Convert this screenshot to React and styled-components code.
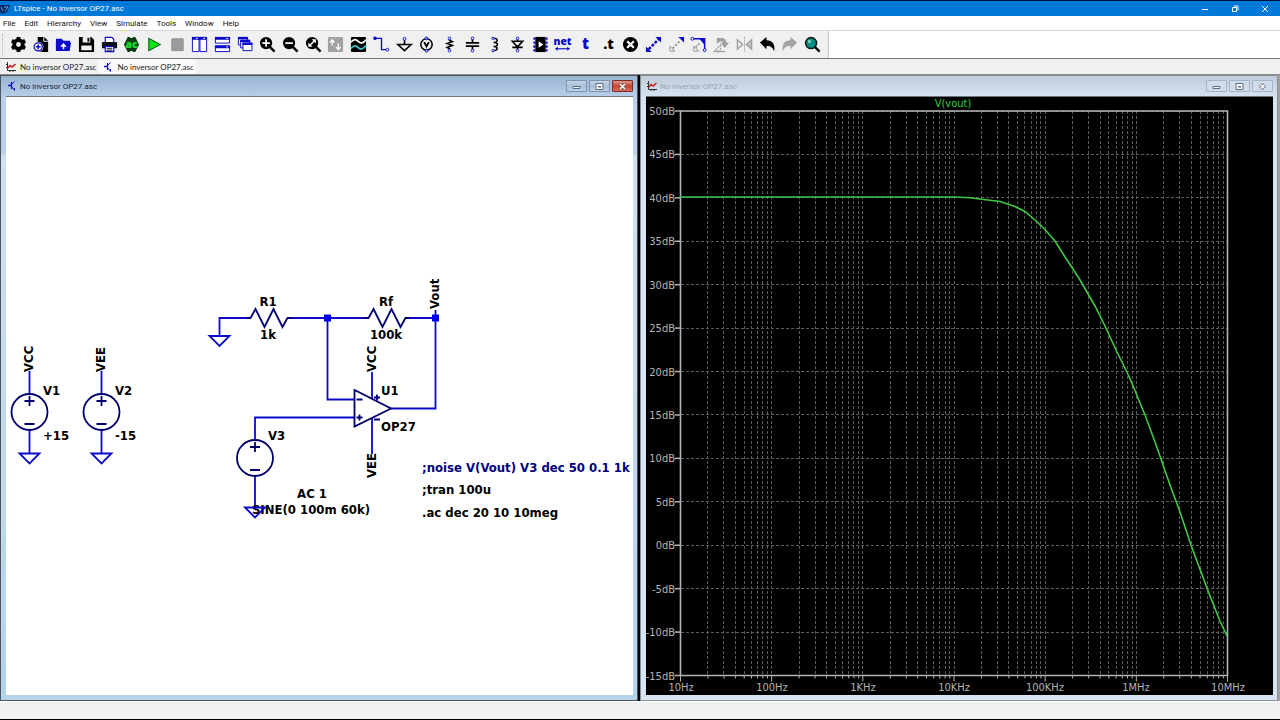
import React, { useState } from "react";
import styled, { createGlobalStyle } from "styled-components";

const GlobalStyle = createGlobalStyle`
  * {
    box-sizing: border-box;
  }
  body {
    margin: 0;
    font-family: Roboto, "Open Sans", sans-serif;
    font-size: 8px;
    background: #f0f0f0;
  }
  button {
    font: inherit;
    color: inherit;
    border: none;
    background: none;
    padding: 0;
  }
`;

const Page = styled.div`
  height: 100vh;
  display: flex;
  flex-direction: column;
  overflow: hidden;
  border-top: 1px solid #02113f;
  border-bottom: 1px solid #000;
`;
const TitleBar = styled.header`
  height: 15px;
  display: flex;
  align-items: center;
  background: #0078d7;
  color: #fff;
`;
const AppTitle = styled.h1`
  margin: 0 0 0 4px;
  font-size: 8px;
  font-weight: 400;
  flex: 1;
`;
const CaptionButton = styled.button`
  width: 30px;
  height: 15px;
  display: flex;
  align-items: center;
  justify-content: center;
`;
const MenuBar = styled.nav`
  height: 15px;
  display: flex;
  align-items: center;
  gap: 9px;
  padding: 0 3px;
  background: #fff;
  border-bottom: 1px solid #d8d8d8;
`;
const MenuItem = styled.button`
  color: #111;
`;
const ToolRow = styled.div`
  height: 28px;
  background: #fff;
  border-bottom: 1px solid #767676;
`;
const Toolbar = styled.div`
  width: 829px;
  height: 27px;
  display: flex;
  align-items: center;
  padding: 0 4px 0 2px;
  background: #f0f0f0;
  border-right: 1px solid #c8c8c8;
`;
const Grip = styled.span`
  width: 5px;
  height: 22px;
  border-left: 1px dotted #b0b0b0;
`;
const ToolButton = styled.button`
  flex: 1;
  height: 24px;
  display: flex;
  align-items: center;
  justify-content: center;
`;
const ToolIcon = styled.svg`
  width: 17px;
  height: 17px;
  overflow: visible;
`;
const TabRow = styled.div`
  height: 16px;
  display: flex;
  align-items: stretch;
  padding-left: 1px;
  background: #f0f0f0;
  border-bottom: 1px solid #8a8a8a;
`;
const Tab = styled.button`
  display: flex;
  align-items: center;
  gap: 4px;
  padding: 0 2px 0 5px;
  font-family: Lato, sans-serif;
  color: #222;
  background: ${(props) => (props.$active ? "#fafafa" : "transparent")};
`;
const Workspace = styled.main`
  flex: 1;
  min-height: 0;
  display: flex;
  gap: 2px;
  padding-right: 2px;
  background: linear-gradient(90deg, #000 60%, #a0a0a0 60%);
`;
const ChildWindow = styled.section`
  flex: 1;
  min-width: 0;
  display: flex;
  flex-direction: column;
  padding: 0 4px 5px 5px;
  border: 1px solid ${(props) => (props.$active ? "#4c5560" : "#8a9097")};
  background: ${(props) =>
    props.$active
      ? "linear-gradient(#99b4d1, #b9d1ea 22px, #b9d1ea 78px, #cfe0f2 80px, #b5d3ea)"
      : "linear-gradient(#bfcddb, #d7e4f2 22px)"};
`;
const ChildTitle = styled.div`
  height: 20px;
  display: flex;
  align-items: center;
  padding-left: 1px;
  color: ${(props) => (props.$active ? "#1c2430" : "#9aa3ad")};
`;
const ChildName = styled.h2`
  margin: 0 0 0 3px;
  font-size: 8px;
  font-weight: 400;
  flex: 1;
`;
const WindowButtons = styled.div`
  display: flex;
  gap: 2px;
`;
const WindowButton = styled.button`
  width: 21px;
  height: 12px;
  display: flex;
  align-items: center;
  justify-content: center;
  border: 1px solid
    ${(props) => (props.$close ? "#7d2a26" : props.$active ? "#7f93ab" : "#a3b3c8")};
  border-radius: 1px;
  background: ${(props) =>
    props.$close
      ? "linear-gradient(#e09a8c, #c8422f 50%, #d9705a)"
      : props.$active
        ? "linear-gradient(#c3d4e8, #a9c0da 50%, #bcd2ea)"
        : "#d0dcea"};
`;
const Pane = styled.div`
  flex: 1;
  min-height: 0;
  overflow: hidden;
  background: ${(props) => (props.$dark ? "#000" : "#fff")};
  border-top: 1px solid #6c7680;
`;
const Canvas = styled.svg`
  display: block;
`;
const StatusBar = styled.footer`
  height: 18px;
  background: #f0f0f0;
  border-top: 1px solid #fff;
`;

const PlotText = styled.text`
  font: 11px "DejaVu Sans Condensed", "DejaVu Sans", sans-serif;
  fill: ${(props) => (props.$trace ? "#2fd33a" : "#b4b4b4")};
`;
const Label = styled.text`
  font: bold 13px "DejaVu Sans Condensed", "DejaVu Sans", sans-serif;
  fill: ${(props) => (props.$comment ? "#000080" : "#000")};
`;

const BLUE = "#0a0ac8";
const NAVY = "#000070";

const zoomLens = (
  <>
    <circle cx="7.5" cy="7.5" r="6.5" fill="#000" />
    <path d="M11 11l5.5 5.5" stroke="#000" strokeWidth="2.6" />
  </>
);

const tools = [
  ["Settings", <>
    <circle cx="9" cy="9" r="4.6" fill="none" stroke="#000" strokeWidth="4" />
    <path d="M9 1v3M9 14v3M2 5l3 1.700M13 11.300l3 1.700M2 13l3-1.700M13 6.700l3-1.700" stroke="#000" strokeWidth="4" />
  </>],
  ["New schematic", <>
    <path d="M5 1h6v5h5v11H5z" fill="#000" />
    <path d="M12 1l4 4h-4z" fill="#000" />
    <circle cx="5.500" cy="11.500" r="5.500" fill="#f0f0f0" />
    <circle cx="5.500" cy="11.500" r="4.300" fill="#fff" stroke={BLUE} strokeWidth="1.300" />
    <path d="M5.500 9v5M3 11.500h5" stroke={BLUE} strokeWidth="1.600" />
  </>],
  ["Open", <>
    <path d="M1 3h6l2 2h7v3H4L2 15H1z" fill={BLUE} />
    <path d="M1 7h16l-1.500 9H1z" fill={BLUE} />
    <path d="M9 14V9M6.500 11.300L9 8.500l2.500 2.800" stroke="#fff" strokeWidth="1.600" fill="none" />
  </>],
  ["Save", <>
    <path d="M1 1h13l3 3v13H1z" fill="#000" />
    <path d="M5 1h8v6H5zM3.500 10h11v5h-11z" fill="#f0f0f0" />
    <path d="M10 2h2v4h-2z" fill="#000" />
  </>],
  ["Print", <>
    <path d="M4.500 1.500h7l2 2V7h-9z" fill="#fff" stroke={BLUE} strokeWidth="1.200" />
    <path d="M1 6.500h16V13H1z" fill="#101010" />
    <path d="M4.500 11h9v5.500h-9z" fill="#fff" stroke={BLUE} strokeWidth="1.200" />
    <path d="M6 13h6M6 15h6" stroke="#000" />
  </>],
  ["Configure analysis", <>
    <path d="M5 1h2l1 1h2l1-1h2l2 4 2 4-2 4-2 4h-2l-1-1H8l-1 1H5l-2-4-2-4 2-4z" fill="#0b3d12" />
    <text x="9" y="12.500" textAnchor="middle" fill="#17e52b" fontSize="11" fontWeight="800" fontFamily="Open Sans">ac</text>
  </>],
  ["Run", <path d="M3 2.500v13L15 9z" fill="#08ea12" stroke="#0b5c10" strokeWidth="1.200" />],
  ["Stop", <path d="M3 3h12v12.500H3z" fill="#9b9b9b" stroke="#8c8c8c" />],
  ["Tile vertically", <>
    <path d="M1.500 1.500h7v15h-7zM9.500 1.500h7v15h-7z" fill="#fff" stroke={BLUE} />
    <path d="M1 1h16v3H1z" fill={BLUE} />
    <path d="M5 2.500h2M13 2.500h2" stroke="#fff" />
  </>],
  ["Tile horizontally", <>
    <path d="M1.500 1.500h15v6h-15zM1.500 10.500h15v6h-15z" fill="#fff" stroke={BLUE} />
    <path d="M1 1h16v3H1zM1 10h16v3H1z" fill={BLUE} />
    <path d="M13 2.500h2M13 11.500h2" stroke="#fff" />
  </>],
  ["Cascade", <>
    {[0, 3, 6].map((d) => (
      <g key={d}>
        <path d={`M${1.5 + d * 0.8} ${1.5 + d}h9.500v8h-9.500z`} fill="#fff" stroke={BLUE} />
        <path d={`M${1 + d * 0.8} ${1 + d}h10.500v2.500h-10.500z`} fill={BLUE} />
      </g>
    ))}
  </>],
  ["Zoom in", <>
    {zoomLens}
    <path d="M7.500 3.500v8M3.500 7.500h8" stroke="#fff" strokeWidth="1.800" />
  </>],
  ["Zoom out", <>
    {zoomLens}
    <path d="M3.500 7.500h8" stroke="#fff" strokeWidth="1.800" />
  </>],
  ["Zoom to fit", <>
    {zoomLens}
    <path d="M5 10l5-5" stroke="#fff" strokeWidth="1.400" />
    <path d="M7 3.500h4.500V8zM3.500 7v4.500H8z" fill="#fff" />
  </>],
  ["Autorange", <>
    <rect x="1" y="1" width="16" height="16" rx="1.500" fill="#a2a2a2" />
    <path d="M5.500 10V5M3 7l2.500-3L8 7M12 8v6M9.500 11.500L12 14.500l2.500-3" stroke="#fff" strokeWidth="1.400" fill="none" />
  </>],
  ["Waveforms", <>
    <rect x="1" y="1" width="16" height="16" rx="1" fill="#000" />
    <path d="M1 6.500C5 2 7 4 9 6s5 2 8-2" stroke="#fff" strokeWidth="1.800" fill="none" />
    <path d="M1 13c4-4 6-2.500 8-.500s5 1.500 8-2.500" stroke="#3cc9d0" strokeWidth="1.800" fill="none" />
  </>],
  ["Wire", <>
    <path d="M2 2.500h7v12h5" stroke={BLUE} strokeWidth="1.400" fill="none" />
    <circle cx="2.200" cy="2.500" r="1.900" fill={BLUE} />
    <circle cx="15.300" cy="14.500" r="1.500" fill="#fff" stroke={BLUE} />
  </>],
  ["Ground", <>
    <path d="M9 4v5M2 9h14l-7 6.500z" stroke="#000" strokeWidth="1.700" fill="none" />
    <circle cx="9" cy="3" r="1.500" fill="#fff" stroke={BLUE} />
  </>],
  ["Voltage source", <>
    <circle cx="9" cy="9" r="6" stroke="#000" strokeWidth="1.600" fill="none" />
    <path d="M6.500 6.500L9 11l2.500-4.500" stroke="#000" strokeWidth="2" fill="none" />
    <circle cx="9" cy="2.500" r="1.500" fill="#aaf" stroke={BLUE} />
    <circle cx="9" cy="15.500" r="1.500" fill="#aaf" stroke={BLUE} />
  </>],
  ["Resistor", <>
    <path d="M9 3v1.500L12 6 6.500 8l5.500 2-5.500 2L9 13.500V15" stroke="#000" strokeWidth="1.700" fill="none" />
    <circle cx="9" cy="2.500" r="1.400" fill="#fff" stroke={BLUE} />
    <circle cx="9" cy="15.500" r="1.400" fill="#fff" stroke={BLUE} />
  </>],
  ["Capacitor", <>
    <path d="M9 3v4M9 11v4M2 7.200h14M2 10.800h14" stroke="#000" strokeWidth="1.800" />
    <circle cx="9" cy="2.500" r="1.400" fill="#fff" stroke={BLUE} />
    <circle cx="9" cy="15.500" r="1.400" fill="#fff" stroke={BLUE} />
  </>],
  ["Inductor", <>
    <path d="M8 2.500c5 0 5 4.300 0 4.300c5.500 0 5.500 4.400 0 4.400c5 0 5 4.300 0 4.300" stroke="#000" strokeWidth="1.600" fill="none" />
    <circle cx="7.500" cy="2.500" r="1.200" fill="#fff" stroke={BLUE} />
    <circle cx="7.500" cy="15.500" r="1.200" fill="#fff" stroke={BLUE} />
  </>],
  ["Diode", <>
    <path d="M9 3v2M9 12v3M3.500 5.500h11L9 11.500zM3.500 12h11" stroke="#000" strokeWidth="1.700" fill="none" />
    <circle cx="9" cy="2.500" r="1.400" fill="#fff" stroke={BLUE} />
    <circle cx="9" cy="15.500" r="1.400" fill="#fff" stroke={BLUE} />
  </>],
  ["Component", <>
    <path d="M3.500 1h11v16h-11z" fill="#000" />
    <path d="M2.500 1.500v15M15.500 1.500v15" stroke={BLUE} strokeWidth="2" strokeDasharray="2.500 1.700" />
    <path d="M7 5.500v7L12 9z" fill="#fff" />
  </>],
  ["Label net", <>
    <text x="9" y="9" textAnchor="middle" fill={BLUE} fontSize="11" fontWeight="800" fontFamily="Open Sans">net</text>
    <path d="M2 13.500h14" stroke={BLUE} strokeWidth="1.200" />
    <path d="M1 13.500l3-2v4zM17 13.500l-3-2v4z" fill={BLUE} />
  </>],
  ["Comment", <text x="9" y="14" textAnchor="middle" fill={BLUE} fontSize="16" fontWeight="800" fontFamily="Open Sans">t</text>],
  ["Directive", <text x="9" y="14" textAnchor="middle" fill="#000" fontSize="15" fontWeight="800" fontFamily="Open Sans">.t</text>],
  ["Delete", <>
    <circle cx="9" cy="9" r="8" fill="#000" />
    <path d="M5.500 5.500l7 7M12.500 5.500l-7 7" stroke="#fff" strokeWidth="2.400" />
  </>],
  ["Move", <>
    <path d="M4 14L14 4" stroke={BLUE} strokeWidth="2.600" strokeDasharray="3 1.500" />
    <path d="M17 1v6l-6-6zM1 17v-6l6 6z" fill={BLUE} />
  </>],
  ["Duplicate", <>
    <path d="M5 13l7-7" stroke="#888" strokeWidth="1.800" strokeDasharray="2 2" />
    <path d="M17 1v6l-6-6z" fill={BLUE} />
    <path d="M2 16v-5l5 5z" fill="#fff" stroke="#888" />
  </>],
  ["Drag", <>
    <path d="M3 3h12.500v11" stroke={BLUE} strokeWidth="1.600" fill="none" />
    <path d="M15 3v6L10 3z" fill={BLUE} />
    <path d="M6 12l5-5" stroke="#888" strokeWidth="1.800" strokeDasharray="2 1.500" />
    <path d="M4 16v-5l5 5z" fill="#fff" stroke="#888" />
    <circle cx="2.500" cy="3" r="1.500" fill="#fff" stroke={BLUE} />
    <circle cx="15.500" cy="15" r="1.500" fill="#fff" stroke={BLUE} />
  </>],
  ["Rotate", <>
    <path d="M8 9.500v6.500H1.500z" stroke="#a0a0a0" strokeWidth="1.400" strokeDasharray="2 1" fill="none" />
    <path d="M1.500 16.500H13" stroke="#a0a0a0" strokeWidth="1.400" />
    <path d="M4 2h5c3.500 0 5 2 5 5h3l-4.500 6L8 7h2.500c0-1-.500-1.500-2-1.500L4 8z" fill="#a0a0a0" />
  </>],
  ["Mirror", <>
    <path d="M1.500 4v10L7 9z" fill="none" stroke="#a0a0a0" strokeWidth="1.500" />
    <path d="M16.500 4v10L11 9z" fill="#c4c4c4" stroke="#a0a0a0" strokeWidth="1.500" />
    <path d="M9 1v16" stroke="#a0a0a0" strokeDasharray="2 1" />
  </>],
  ["Undo", <path d="M1 7l7-6v3.500c6 0 9.500 4 8 12-1-4-3-6-8-6V14z" fill="#000" />],
  ["Redo", <path d="M17 7l-7-6v3.500c-6 0-9.500 4-8 12 1-4 3-6 8-6V14z" fill="#a4a4a4" />],
  ["Search", <>
    <circle cx="7.500" cy="7.500" r="5.800" fill="#079083" stroke="#05201d" strokeWidth="1.700" />
    <circle cx="5.700" cy="5.700" r="1.600" fill="#6fd6c8" />
    <path d="M11.500 11.500l5 5" stroke="#000" strokeWidth="2.400" />
  </>],
];

const menus = ["File", "Edit", "Hierarchy", "View", "Simulate", "Tools", "Window", "Help"];

const SchematicIcon = () => (
  <svg width="10" height="10" viewBox="0 0 10 10" fill="none" stroke="#1515c0">
    <path d="M1 4.500h3M4.500 1v7" strokeWidth="1.300" />
    <path d="M4.500 3.500L7.500 .500M4.500 5.500l3 4M7.500 9.500V7" />
  </svg>
);

const WaveIcon = () => (
  <svg width="10" height="10" viewBox="0 0 10 10" fill="none">
    <path d="M1.500 0v8.500H10M0 2.500h1.500M0 5.500h1.500M4 8.500V10M7 8.500V10" stroke="#333" />
    <path d="M2 6l2-2.500 2 1.500 3.500-3" stroke="#d01818" strokeWidth="1.500" />
  </svg>
);

const WindowControls = ({ active }) => (
  <WindowButtons>
    <WindowButton aria-label="Minimize" $active={active}>
      <svg width="9" height="7" viewBox="0 0 9 7">
        <path d="M1 3.500h7v2H1z" fill="#fff" stroke="#5f6b80" />
      </svg>
    </WindowButton>
    <WindowButton aria-label="Maximize" $active={active}>
      <svg width="9" height="7" viewBox="0 0 9 7">
        <path d="M1 .500h7v6H1z" fill="#fff" stroke="#5f6b80" />
        <path d="M3 3h3v1.500H3z" fill="#5f6b80" />
      </svg>
    </WindowButton>
    <WindowButton aria-label="Close" $active={active} $close={active}>
      <svg width="9" height="7" viewBox="0 0 9 7">
        <path d="M2 1l5 5M7 1L2 6" stroke="#5f5a6b" strokeWidth="2.800" />
        <path d="M2 1l5 5M7 1L2 6" stroke="#fff" strokeWidth="1.500" />
      </svg>
    </WindowButton>
  </WindowButtons>
);

const Ground = ({ x, y }) => (
  <path d={`M${x - 10} ${y}h20l-10 10z`} fill="none" stroke={BLUE} strokeWidth="1.800" />
);

// y is the centre of the source circle
const Source = ({ x, y }) => (
  <g fill="none" stroke={NAVY} strokeWidth="1.800">
    <circle cx={x} cy={y} r="18" />
    <path d={`M${x - 5} ${y - 11}h10M${x} ${y - 16}v10M${x - 5} ${y + 12}h10`} />
  </g>
);

const Resistor = ({ x, y }) => (
  <path
    d={`M${x - 22} ${y}h4l5-9 9 18 9-18 9 18 5-9h4`}
    fill="none"
    stroke={NAVY}
    strokeWidth="1.800"
  />
);

const Schematic = () => (
  <Canvas width="628" height="599" viewBox="6 97 628 599" role="img" aria-label="Schematic">
    <g fill="none" stroke={BLUE} strokeWidth="1.800">
      <path d="M29.500 371v23M29.500 430v23M101.500 371v23M101.500 430v23" />
      <path d="M219.500 336v-18H247M290 318h75M408 318h27.500M435.500 310v98.500H391" />
      <path d="M327.500 318v81.500H354M354 417.500h-99V440M255 476v31" />
      <path d="M372 372v27M372 418v36" />
    </g>
    <Source x={29.5} y={412} />
    <Source x={101.5} y={412} />
    <Source x={255} y={458} />
    <Ground x={29.5} y={453.5} />
    <Ground x={101.5} y={453.5} />
    <Ground x={219.5} y={336} />
    <Resistor x={268.5} y={318} />
    <Resistor x={386.5} y={318} />
    <g fill="none" stroke={NAVY} strokeWidth="1.800">
      <path d="M354.500 390v36.500L391 408.500z" />
      <path d="M356.500 399.500h6M356.500 417.500h6M359.500 414.500v6M374 397.500h6M377 394.500v6M374 419.500h6" />
    </g>
    <path d="M324 314.500h7v7h-7zM432 314.500h7v7h-7z" fill="#0000f0" />
    <g>
      <Label x="43" y="395">V1</Label>
      <Label x="43" y="440">+15</Label>
      <Label x="115" y="395">V2</Label>
      <Label x="115" y="440">-15</Label>
      <Label x="268" y="306" textAnchor="middle">R1</Label>
      <Label x="268" y="339" textAnchor="middle">1k</Label>
      <Label x="386" y="306" textAnchor="middle">Rf</Label>
      <Label x="386" y="339" textAnchor="middle">100k</Label>
      <Label x="381" y="395">U1</Label>
      <Label x="381" y="431">OP27</Label>
      <Label x="268" y="440">V3</Label>
      <Label x="312" y="498" textAnchor="middle">AC 1</Label>
      <Label x="311" y="514" textAnchor="middle">SINE(0 100m 60k)</Label>
      <Label transform="translate(33 372) rotate(-90)">VCC</Label>
      <Label transform="translate(105 372) rotate(-90)">VEE</Label>
      <Label transform="translate(376 372) rotate(-90)">VCC</Label>
      <Label transform="translate(376 478) rotate(-90)">VEE</Label>
      <Label transform="translate(439 309) rotate(-90)">Vout</Label>
      <Label x="422" y="472" $comment>;noise V(Vout) V3 dec 50 0.1 1k</Label>
      <Label x="422" y="494">;tran 100u</Label>
      <Label x="422" y="517">.ac dec 20 10 10meg</Label>
    </g>
    <Ground x={255} y={507.5} />
  </Canvas>
);

const PLOT = { left: 680.5, right: 1227.5, top: 111, bottom: 675.5 };
const DECADE = (PLOT.right - PLOT.left) / 6;
const STEP = (PLOT.bottom - PLOT.top) / 13;

const freqs = ["10Hz", "100Hz", "1KHz", "10KHz", "100KHz", "1MHz", "10MHz"];
const levels = Array.from({ length: 14 }, (_, i) => 50 - i * 5);

const gridX = [];
for (let d = 0; d < 6; d++) {
  for (let n = 2; n <= 10; n++) {
    gridX.push({ x: PLOT.left + DECADE * (d + Math.log10(n)), major: n === 10 });
  }
}

const trace = [
  [680, 197], [940, 197], [955, 197], [970, 197.7], [980, 199], [1000, 201.5],
  [1015, 206.5], [1025, 211.5], [1035, 220], [1045, 229.5], [1055, 241],
  [1065, 257], [1073, 269], [1080, 280], [1095, 306], [1105, 326], [1116, 350],
  [1126, 370], [1131, 381], [1145, 415], [1155, 442], [1161, 459], [1170, 485],
  [1180, 512], [1191, 545], [1201, 572], [1210, 596], [1220, 621], [1227, 636],
];

const Plot = () => (
  <Canvas width="628" height="599" viewBox="646 97 628 599" role="img" aria-label="Frequency response">
    <g stroke="#5c5c5c" strokeDasharray="3 2" shapeRendering="crispEdges">
      {gridX.map(({ x }) => (
        <path key={x} d={`M${x} ${PLOT.top}V${PLOT.bottom}`} />
      ))}
      {levels.map((level, i) => (
        <path key={level} d={`M${PLOT.left} ${PLOT.top + i * STEP}H${PLOT.right}`} />
      ))}
    </g>
    <g stroke="#b4b4b4" fill="none">
      <path d="M680.500 111h547v564.500h-547z" strokeWidth="1.600" />
      {gridX.map(({ x, major }) => (
        <path key={x} d={`M${x} ${PLOT.bottom}v${major ? 6 : 3}`} />
      ))}
      <path d={`M${PLOT.left} ${PLOT.bottom}v6`} />
      {levels.map((level, i) => (
        <path key={level} d={`M${PLOT.left - 6} ${PLOT.top + i * STEP}h6`} strokeWidth="1.500" />
      ))}
    </g>
    <polyline
      points={trace.map((p) => p.join(",")).join(" ")}
      fill="none"
      stroke="#3fc843"
      strokeWidth="1.600"
    />
    {levels.map((level, i) => (
      <PlotText key={level} x="675" y={Math.round(PLOT.top + i * STEP) + 4} textAnchor="end">
        {level}dB
      </PlotText>
    ))}
    {freqs.map((freq, i) => (
      <PlotText key={freq} x={Math.round(PLOT.left + i * DECADE)} y="691" textAnchor="middle">
        {freq}
      </PlotText>
    ))}
    <PlotText x="953" y="107" textAnchor="middle" $trace>V(vout)</PlotText>
  </Canvas>
);

const App = () => {
  const [active, setActive] = useState("schematic");
  const file = "No inversor OP27.asc";

  return (
    <>
      <GlobalStyle />
      <Page>
        <TitleBar>
          <svg width="10" height="12" viewBox="0 0 10 12">
            <path d="M0 2h10L7 9 2 11 0 9z" fill="#0a2a66" />
            <path d="M1 4l2 4M4 4h4L5 8" stroke="#58a6e8" fill="none" />
          </svg>
          <AppTitle>LTspice - {file}</AppTitle>
          <CaptionButton aria-label="Minimize">
            <svg width="8" height="8" viewBox="0 0 8 8" stroke="#fff">
              <path d="M1 4.500h6" />
            </svg>
          </CaptionButton>
          <CaptionButton aria-label="Restore">
            <svg width="8" height="8" viewBox="0 0 8 8" stroke="#fff" fill="none">
              <path d="M1.500 2.500h4v4h-4zM3 1h4v4.500" />
            </svg>
          </CaptionButton>
          <CaptionButton aria-label="Close">
            <svg width="8" height="8" viewBox="0 0 8 8" stroke="#fff">
              <path d="M1 1l6 6M7 1L1 7" />
            </svg>
          </CaptionButton>
        </TitleBar>
        <MenuBar>
          {menus.map((menu) => (
            <MenuItem key={menu}>{menu}</MenuItem>
          ))}
        </MenuBar>
        <ToolRow>
          <Toolbar>
            <Grip />
            {tools.map(([name, icon]) => (
              <ToolButton key={name} aria-label={name}>
                <ToolIcon viewBox="0 0 18 18">{icon}</ToolIcon>
              </ToolButton>
            ))}
          </Toolbar>
        </ToolRow>
        <TabRow>
          <Tab $active={active === "plot"} onClick={() => setActive("plot")}>
            <WaveIcon />
            {file}
          </Tab>
          <Tab $active={active === "schematic"} onClick={() => setActive("schematic")}>
            <SchematicIcon />
            {file}
          </Tab>
        </TabRow>
        <Workspace>
          <ChildWindow $active={active === "schematic"}>
            <ChildTitle $active={active === "schematic"}>
              <SchematicIcon />
              <ChildName>{file}</ChildName>
              <WindowControls active={active === "schematic"} />
            </ChildTitle>
            <Pane>
              <Schematic />
            </Pane>
          </ChildWindow>
          <ChildWindow $active={active === "plot"}>
            <ChildTitle $active={active === "plot"}>
              <WaveIcon />
              <ChildName>{file}</ChildName>
              <WindowControls active={active === "plot"} />
            </ChildTitle>
            <Pane $dark>
              <Plot />
            </Pane>
          </ChildWindow>
        </Workspace>
        <StatusBar />
      </Page>
    </>
  );
};

export default App;
